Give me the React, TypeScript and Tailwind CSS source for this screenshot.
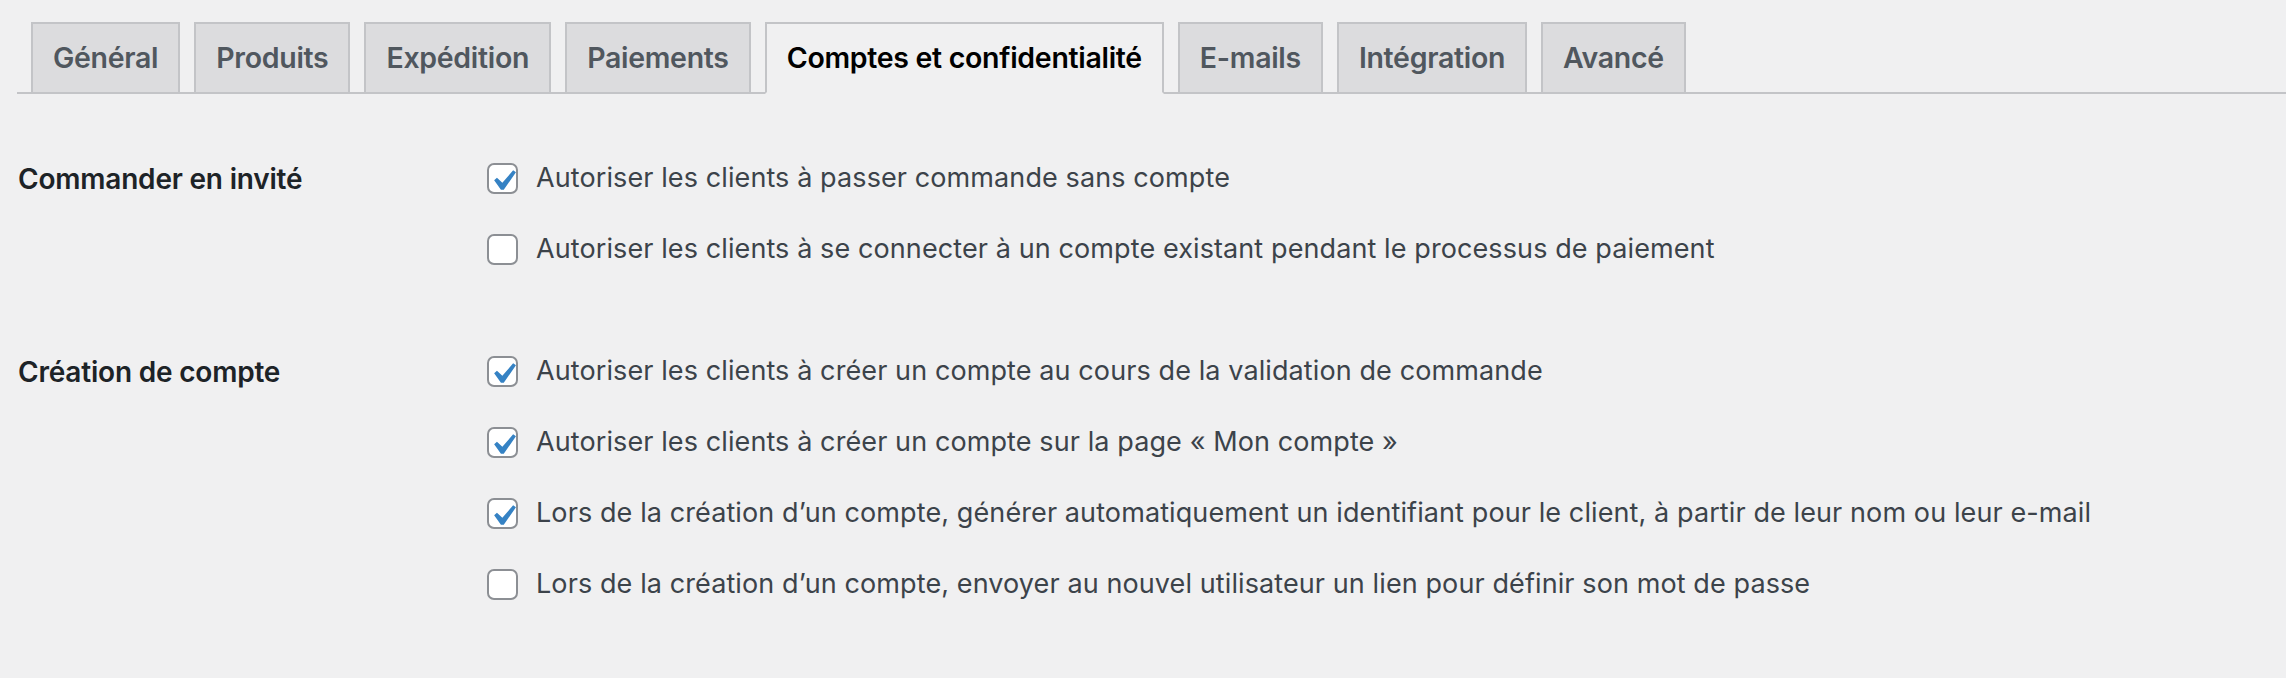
import React from 'react';

const tabs = [
  { label: 'Général' },
  { label: 'Produits' },
  { label: 'Expédition' },
  { label: 'Paiements' },
  { label: 'Comptes et confidentialité', active: true },
  { label: 'E-mails' },
  { label: 'Intégration' },
  { label: 'Avancé' },
];

const sections = [
  {
    title: 'Commander en invité',
    options: [
      { text: 'Autoriser les clients à passer commande sans compte', checked: true },
      { text: 'Autoriser les clients à se connecter à un compte existant pendant le processus de paiement', checked: false },
    ],
  },
  {
    title: 'Création de compte',
    options: [
      { text: 'Autoriser les clients à créer un compte au cours de la validation de commande', checked: true },
      { text: 'Autoriser les clients à créer un compte sur la page « Mon compte »', checked: true },
      { text: 'Lors de la création d’un compte, générer automatiquement un identifiant pour le client, à partir de leur nom ou leur e-mail', checked: true },
      { text: 'Lors de la création d’un compte, envoyer au nouvel utilisateur un lien pour définir son mot de passe', checked: false },
    ],
  },
];

function Checkbox({ checked }: { checked: boolean }) {
  return (
    <span className="relative flex-shrink-0 w-[31px] h-[31px] rounded-[7px] border-2 border-[#8c8f94] bg-white">
      {checked && (
        <svg viewBox="0 0 20 20" className="absolute left-[-7px] top-[-5px] w-[42px] h-[42px]">
          <path d="M14.83 4.89l1.34.94-5.81 8.38H9.02L5.78 9.67l1.34-1.25 2.57 2.4z" fill="#3582c4" />
        </svg>
      )}
    </span>
  );
}

export default function App() {
  return (
    <div className="w-[2286px] h-[678px] bg-[#f0f0f1] overflow-hidden font-['Inter',sans-serif]">

      {/* ── Tabs ─────────────────────────────────────────────────── */}
      <div className="pl-[17px] pt-[22px]">
        <nav className="flex items-end gap-[14px] pl-[14px] border-b-2 border-[#c3c4c7]">
          {tabs.map((t) => (
            <div
              key={t.label}
              className={
                t.active
                  ? 'h-[72px] -mb-[2px] px-[20px] flex items-center border-2 border-b-2 border-[#c3c4c7] border-b-[#f0f0f1] bg-[#f0f0f1] text-black text-[28.5px] font-semibold tracking-[-0.3px]'
                  : 'h-[70px] px-[20px] flex items-center border-2 border-b-0 border-[#c3c4c7] bg-[#dcdcde] text-[#50575e] text-[28.5px] font-semibold tracking-[-0.3px]'
              }
            >
              {t.label}
            </div>
          ))}
        </nav>
      </div>

      {/* ── Settings table ───────────────────────────────────────── */}
      <div className="pl-[18px] pt-[49px] flex flex-col gap-[51px]">
        {sections.map((s) => (
          <div key={s.title} className="flex">
            <div className="w-[469px] h-[71px] flex items-center text-[28px] font-semibold tracking-[-0.2px] text-[#1d2327] flex-shrink-0">
              {s.title}
            </div>
            <div className="flex flex-col">
              {s.options.map((o) => (
                <label key={o.text} className="h-[71px] flex items-center gap-[18px] text-[27px] tracking-[0.1px] text-[#3c434a] whitespace-nowrap">
                  <Checkbox checked={o.checked} />
                  <span>{o.text}</span>
                </label>
              ))}
            </div>
          </div>
        ))}
      </div>

    </div>
  );
}
